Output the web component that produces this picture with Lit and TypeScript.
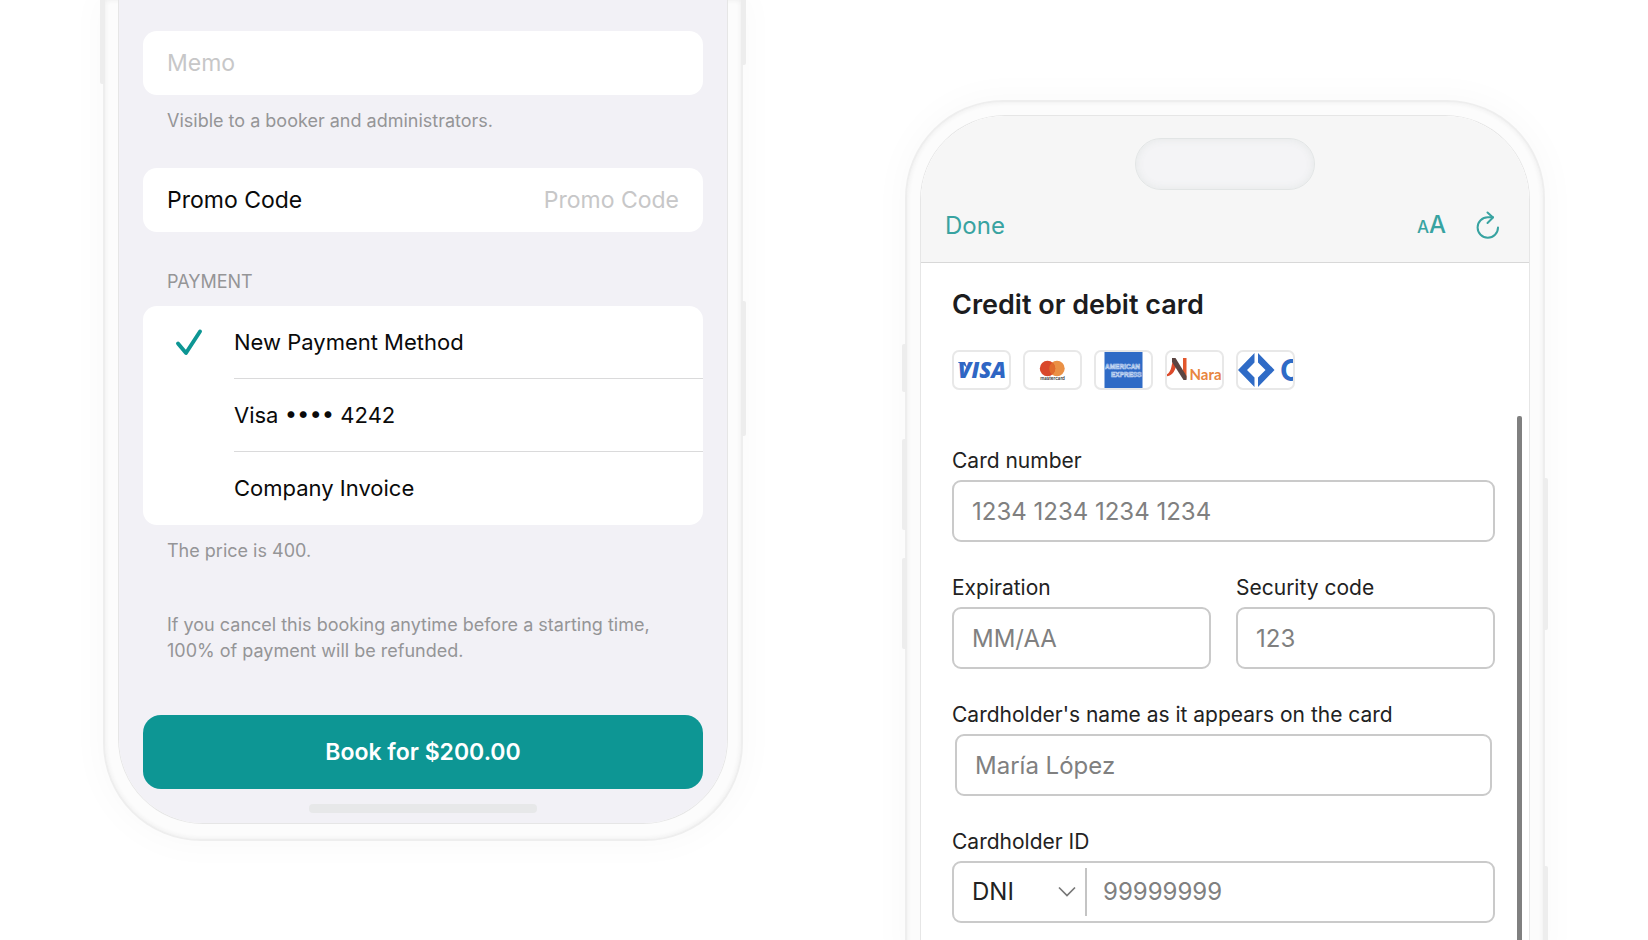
import { LitElement, html, css, svg, nothing } from "lit";
import { customElement, property, state } from "lit/decorators.js";

const FONT = css`"Inter", "Liberation Sans", sans-serif`;

/** Phone body: bezel, side buttons and the screen that holds the slotted content. */
@customElement("phone-frame")
class PhoneFrame extends LitElement {
  @property({ reflect: true }) cut = "top";

  static styles = css`
    :host {
      display: block;
      position: relative;
      box-sizing: border-box;
      background: #fcfcfc;
      border: 2px solid #eeeeee;
      box-shadow: 0 0 34px 6px rgba(0, 0, 0, 0.022), inset 0 0 5px #ebebeb;
    }
    :host([cut="top"]) {
      border-top: 0;
      border-radius: 0 0 98px 98px;
      padding: 0 14px 16px;
    }
    :host([cut="bottom"]) {
      border-bottom: 0;
      border-radius: 98px 98px 0 0;
      padding: 14px 14px 0;
    }
    .screen {
      box-sizing: border-box;
      height: 100%;
      overflow: hidden;
      box-shadow: 0 0 0 1px #e6e6e6;
    }
    :host([cut="top"]) .screen {
      border-radius: 0 0 84px 84px;
    }
    :host([cut="bottom"]) .screen {
      border-radius: 84px 84px 0 0;
    }
    .key {
      position: absolute;
      width: 5px;
      background: #ededed;
      border-radius: 2px;
    }
    .left {
      right: 100%;
    }
    .right {
      left: 100%;
    }
    .a1 { top: -10px; height: 94px; }
    .a2 { top: -10px; height: 75px; }
    .a3 { top: 301px; height: 135px; }
    .b1 { top: 242px; height: 48px; }
    .b2 { top: 337px; height: 91px; }
    .b3 { top: 456px; height: 91px; }
    .b4 { top: 376px; height: 152px; }
    .b5 { top: 764px; height: 100px; }
  `;

  render() {
    const keys =
      this.cut === "top"
        ? ["left a1", "right a2", "right a3"]
        : ["left b1", "left b2", "left b3", "right b4", "right b5"];
    return html`${keys.map((k) => html`<span class="key ${k}"></span>`)}
      <div class="screen"><slot></slot></div>`;
  }
}

@customElement("booking-screen")
class BookingScreen extends LitElement {
  @state() selected = 0;

  static styles = css`
    :host {
      display: block;
      background: #f2f1f6;
      padding: 31px 24px 10px;
      font-family: ${FONT};
      font-size: 23px;
      color: #0a0a0a;
    }
    .card {
      background: #fff;
      border-radius: 14px;
      overflow: hidden;
    }
    .field {
      display: flex;
      align-items: center;
      height: 64px;
      padding: 0 24px;
    }
    input[type="text"] {
      flex: 1;
      min-width: 0;
      border: 0;
      padding: 0;
      outline: none;
      background: none;
      font: inherit;
      color: inherit;
    }
    input::placeholder {
      color: #c7c7c8;
      opacity: 1;
    }
    .end {
      text-align: right;
    }
    .note,
    .heading {
      margin: 0;
      padding: 0 24px;
      font-size: 18px;
      font-weight: 400;
      line-height: 26px;
      color: #959597;
    }
    .note {
      margin-top: 13px;
    }
    .promo {
      margin-top: 34px;
    }
    .heading {
      margin: 37px 0 11px;
    }
    .terms {
      margin-top: 48px;
    }
    .options {
      padding-bottom: 1px;
      font-size: 22px;
    }
    .option {
      display: grid;
      grid-template-columns: 91px 1fr;
    }
    .option input {
      position: absolute;
      opacity: 0;
      pointer-events: none;
    }
    .mark {
      display: flex;
      align-items: center;
      justify-content: center;
    }
    .name {
      display: flex;
      align-items: center;
      height: 72px;
    }
    .option + .option .name {
      border-top: 1px solid #dadadb;
    }
    .book {
      display: block;
      width: 100%;
      height: 74px;
      margin: 51px 0 15px;
      border: 0;
      border-radius: 18px;
      background: #0d9694;
      color: #fff;
      font: inherit;
      font-weight: 600;
    }
    .home {
      width: 228px;
      height: 9px;
      margin: 0 auto;
      border-radius: 4px;
      background: #e7e8e9;
    }
  `;

  render() {
    const options = ["New Payment Method", "Visa •••• 4242", "Company Invoice"];
    return html`
      <div class="card field">
        <input type="text" aria-label="Memo" placeholder="Memo" />
      </div>
      <p class="note">Visible to a booker and administrators.</p>
      <div class="card field promo">
        <label for="promo">Promo Code</label>
        <input id="promo" class="end" type="text" placeholder="Promo Code" />
      </div>
      <h2 class="heading" id="pay">PAYMENT</h2>
      <div class="card options" role="radiogroup" aria-labelledby="pay">
        ${options.map(
          (name, i) => html`<label class="option">
            <span class="mark">
              <input
                type="radio"
                name="method"
                .checked=${i === this.selected}
                @change=${() => (this.selected = i)}
              />
              ${i === this.selected
                ? html`<svg width="28" height="28" viewBox="0 0 28 28" aria-hidden="true">
                    <path
                      d="M3 15.5 L11 25 L25 3.500"
                      fill="none"
                      stroke="#0d9694"
                      stroke-width="3.900"
                      stroke-linecap="round"
                      stroke-linejoin="round"
                    />
                  </svg>`
                : nothing}
            </span>
            <span class="name">${name}</span>
          </label>`
        )}
      </div>
      <p class="note">The price is 400.</p>
      <p class="note terms">
        If you cancel this booking anytime before a starting time, 100% of payment will be refunded.
      </p>
      <button class="book" type="button">Book for $200.00</button>
      <div class="home"></div>
    `;
  }
}

const BRANDS = [
  {
    name: "Visa",
    art: svg`<text x="30" y="28" text-anchor="middle" font-family="Open Sans" font-weight="800" font-style="italic" font-size="22" fill="#2f66c4">VISA</text>
      <path d="M6 12 H13 L16 20 C14 16 11 13.500 6 12.500 Z" fill="#2f66c4"/>`,
  },
  {
    name: "Mastercard",
    art: svg`<circle cx="34" cy="18.500" r="7.700" fill="#ea9045"/>
      <circle cx="24.500" cy="18.500" r="7.700" fill="#d9482b"/>
      <path d="M29.250 12.400 A7.700 7.700 0 0 1 29.250 24.600 A7.700 7.700 0 0 1 29.250 12.400" fill="#e06a2c"/>
      <text x="29.500" y="30" text-anchor="middle" font-family="Inter" font-weight="600" font-size="4.500" fill="#333">mastercard</text>`,
  },
  {
    name: "American Express",
    art: svg`<rect x="10.500" y="1" width="38" height="38" fill="#2f6bc6"/>
      <g font-family="Liberation Sans" font-weight="700" font-size="6.500" fill="#2f6bc6" stroke="#c9daf3" stroke-width="0.600">
        <text x="11" y="19">AMERICAN</text><text x="17" y="27">EXPRESS</text>
      </g>`,
  },
  {
    name: "Naranja",
    art: svg`<path d="M0 25 C5 24 6 19 7 14 L9 8 L12 13 C10 21 8 26 0 26.500 Z" fill="#dc4a2a"/>
      <path d="M18 8 H21.500 V29 L18 25 Z" fill="#e2572d"/>
      <path d="M7 8 H10.500 L21.500 26 V30 H18.500 L7 12 Z" fill="#5b4441"/>
      <text x="24.500" y="29.500" font-family="Lato" font-weight="700" font-size="15" fill="#e8853f">Nara</text>`,
  },
  {
    name: "Cabal",
    art: svg`<path d="M18.500 3 L2 20 L18.500 37 V27.500 L11 20 L18.500 12.500 Z" fill="#2f6bc6"/>
      <path d="M22 3 L38.500 20 L22 37 V27.500 L29.500 20 L22 12.500 Z" fill="#2f6bc6"/>
      <text x="44" y="30.500" font-family="Inter" font-weight="700" font-size="30" fill="#2f6bc6">C</text>`,
  },
];

@customElement("card-screen")
class CardScreen extends LitElement {
  static styles = css`
    :host {
      display: block;
      position: relative;
      height: 100%;
      background: #fff;
      font-family: ${FONT};
      color: #222;
    }
    .top {
      background: #f6f6f6;
      border-bottom: 1px solid #d8d8d8;
      padding-top: 22px;
    }
    .island {
      width: 180px;
      height: 52px;
      margin: 0 auto;
      box-sizing: border-box;
      border: 1px solid #e2e5e5;
      border-radius: 26px;
      background: #f4f4f6;
      box-shadow: inset 0 0 8px #e4e7e7;
    }
    .bar {
      display: flex;
      align-items: center;
      height: 72px;
      padding: 0 28px 0 24px;
    }
    .bar button {
      border: 0;
      padding: 0;
      background: none;
      font: inherit;
      font-size: 24px;
      line-height: 30px;
      color: #38a3a1;
    }
    .bar .size {
      margin-left: auto;
      margin-right: 29px;
      font-weight: 500;
    }
    .small {
      font-size: 17px;
    }
    .bar svg {
      display: block;
    }
    form {
      padding: 26px 34px 0 31px;
    }
    h1 {
      margin: 0;
      font-size: 27px;
      line-height: 32px;
      font-weight: 600;
      color: #1c1c1e;
    }
    .brands {
      display: flex;
      gap: 12px;
      margin: 29px 0 58px;
      padding: 0;
      list-style: none;
    }
    .brand {
      box-sizing: border-box;
      width: 59px;
      height: 40px;
      border: 2px solid #e8e8e8;
      border-radius: 7px;
      overflow: hidden;
    }
    .brand svg {
      display: block;
      margin: -2px;
    }
    .pair {
      display: grid;
      grid-template-columns: 1fr 1fr;
      gap: 25px;
    }
    .field {
      display: flex;
      flex-direction: column;
      gap: 6px;
      margin-bottom: 33px;
      font-size: 21px;
      line-height: 26px;
    }
    .box {
      box-sizing: border-box;
      width: 100%;
      height: 62px;
      border: 2px solid #cacaca;
      border-radius: 9px;
      padding: 0 18px;
      background: #fff;
      font: inherit;
      font-size: 24px;
      color: #222;
      outline: none;
    }
    ::placeholder {
      color: #808080;
      opacity: 1;
    }
    .inset {
      padding: 0 3px;
    }
    .joined {
      display: flex;
      align-items: center;
      padding: 0;
    }
    .picker {
      display: flex;
      align-items: center;
      width: 131px;
      height: 48px;
      border-right: 2px solid #c4c4c4;
    }
    select {
      appearance: none;
      flex: 1;
      min-width: 0;
      border: 0;
      padding: 0 0 0 18px;
      background: none;
      font: inherit;
      color: inherit;
      outline: none;
    }
    .picker svg {
      margin-right: 9px;
    }
    .joined input {
      flex: 1;
      min-width: 0;
      border: 0;
      padding: 0 16px;
      background: none;
      font: inherit;
      color: inherit;
      outline: none;
    }
    .scroll {
      position: absolute;
      top: 300px;
      bottom: -4px;
      right: 7px;
      width: 5px;
      border-radius: 2px;
      background: #808080;
    }
  `;

  render() {
    return html`
      <header class="top">
        <div class="island"></div>
        <div class="bar">
          <button type="button">Done</button>
          <button type="button" class="size" aria-label="Text size">
            <span class="small">A</span>A
          </button>
          <button type="button" aria-label="Reload">
            <svg width="26" height="30" viewBox="0 0 26 30">
              <g fill="none" stroke="#38a3a1" stroke-width="2" stroke-linecap="round" stroke-linejoin="round">
                <path d="M23 16.500 A10.200 10.200 0 1 1 12.800 6.300 L18 6.300" />
                <path d="M12.500 1.500 L18 6.500 L12.500 12" />
              </g>
            </svg>
          </button>
        </div>
      </header>
      <form>
        <h1>Credit or debit card</h1>
        <ul class="brands">
          ${BRANDS.map(
            (b) => html`<li class="brand">
              <svg width="59" height="40" viewBox="0 0 59 40" role="img" aria-label=${b.name}>${b.art}</svg>
            </li>`
          )}
        </ul>
        <div class="field">
          <label for="number">Card number</label>
          <input id="number" class="box" type="text" placeholder="1234 1234 1234 1234" />
        </div>
        <div class="pair">
          <div class="field">
            <label for="exp">Expiration</label>
            <input id="exp" class="box" type="text" placeholder="MM/AA" />
          </div>
          <div class="field">
            <label for="cvc">Security code</label>
            <input id="cvc" class="box" type="text" placeholder="123" />
          </div>
        </div>
        <div class="field">
          <label for="holder">Cardholder's name as it appears on the card</label>
          <div class="inset">
            <input id="holder" class="box" type="text" placeholder="María López" />
          </div>
        </div>
        <div class="field">
          <label for="doc">Cardholder ID</label>
          <div class="box joined">
            <div class="picker">
              <select aria-label="ID type">
                <option>DNI</option>
              </select>
              <svg width="18" height="12" viewBox="0 0 18 12" aria-hidden="true">
                <path d="M1 1.500 L9 9.500 L17 1.500" fill="none" stroke="#777" stroke-width="1.700" />
              </svg>
            </div>
            <input id="doc" type="text" placeholder="99999999" />
          </div>
        </div>
      </form>
      <div class="scroll"></div>
    `;
  }
}

@customElement("app-root")
class AppRoot extends LitElement {
  static styles = css`
    :host {
      display: block;
      background: #fff;
    }
    .stage {
      display: grid;
      grid-template-columns: 1fr 1fr;
      gap: 162px;
      box-sizing: border-box;
      height: 100vh;
      padding: 0 103px;
      overflow: hidden;
    }
    .first {
      align-self: start;
    }
    .second {
      margin-top: 100px;
    }
  `;

  render() {
    return html`<main class="stage">
      <phone-frame class="first" cut="top"><booking-screen></booking-screen></phone-frame>
      <phone-frame class="second" cut="bottom"><card-screen></card-screen></phone-frame>
    </main>`;
  }
}
